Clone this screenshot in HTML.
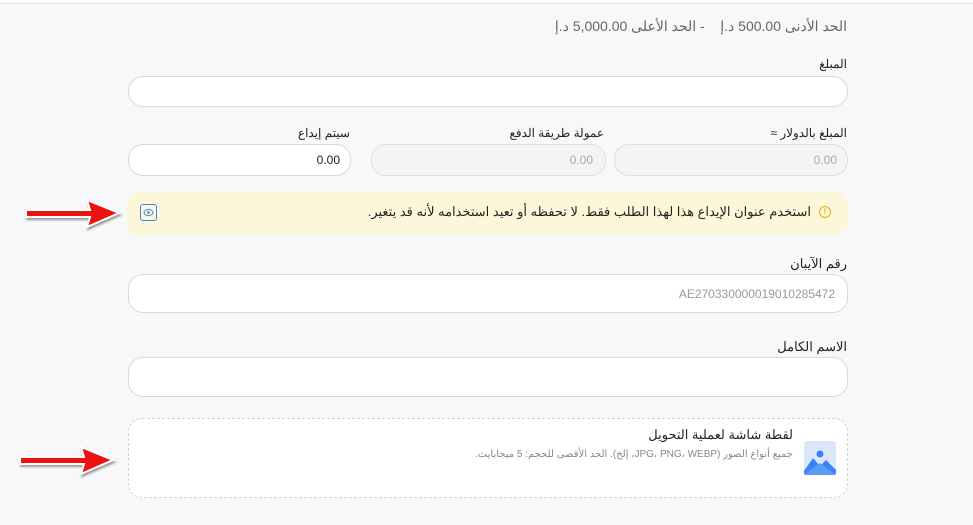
<!DOCTYPE html><html><head><meta charset="utf-8"><style>
body{margin:0;width:973px;height:525px;background:#f7f8fa;font-family:"Liberation Sans","Noto Sans CJK SC",sans-serif;position:relative;overflow:hidden}
.a{position:absolute}
.t{position:absolute;direction:rtl;white-space:nowrap;font-size:12px;color:#222}
.in{position:absolute;background:#fff;border:1px solid #d5d8de;border-radius:15px;box-sizing:border-box}
.dis{background:#f3f4f6;border-color:#dcdfe4}
.v{position:absolute;font-size:12px;color:#999;top:50%;transform:translateY(-50%)}
</style></head><body>
<div class="a" style="left:0;top:0;width:973px;height:3px;background:#fff;border-bottom:1px solid #e5e7eb"></div>
<div class="t" style="right:126px;top:18px;font-size:14px;color:#666">الحد الأدنى 500.00 د.إ &nbsp;&nbsp; - الحد الأعلى 5,000.00 د.إ</div>
<div class="t" style="right:126px;top:57px">المبلغ</div>
<div class="in" style="left:128px;top:76px;width:720px;height:31px"></div>
<div class="t" style="right:126px;top:126px">المبلغ بالدولار ≈</div>
<div class="t" style="right:369px;top:126px">عمولة طريقة الدفع</div>
<div class="t" style="right:623px;top:126px">سيتم إيداع</div>
<div class="in" style="left:128px;top:144px;width:223px;height:32px"><span class="v" style="right:10px;color:#222">0.00</span></div>
<div class="in dis" style="left:371px;top:144px;width:235px;height:32px"><span class="v" style="right:12px;color:#aaa">0.00</span></div>
<div class="in dis" style="left:614px;top:144px;width:234px;height:32px"><span class="v" style="right:10px;color:#aaa">0.00</span></div>
<div class="a" style="left:127px;top:192px;width:721px;height:43px;background:#fdf7d9;border-radius:12px"></div>
<div class="a" style="left:819px;top:206px;width:10px;height:10px;border:1.5px solid #e5b000;border-radius:50%;font-size:8px;color:#e5b000;text-align:center;line-height:10px;font-weight:bold">!</div>
<div class="t" style="right:162px;top:204px;font-size:13px">استخدم عنوان الإيداع هذا لهذا الطلب فقط. لا تحفظه أو تعيد استخدامه لأنه قد يتغير.</div>
<div class="a" style="left:140px;top:204px;width:17px;height:17px;border:1px solid #3b82f6;border-radius:3px;box-sizing:border-box"><svg width="15" height="15" viewBox="0 0 15 15" style="position:absolute;left:0;top:0"><ellipse cx="7.5" cy="7.5" rx="4.5" ry="3" fill="none" stroke="#3b82f6" stroke-width="1"/><circle cx="7.5" cy="7.5" r="1.3" fill="#3b82f6"/></svg></div>
<div class="t" style="right:126px;top:256px;font-size:13px">رقم الآيبان</div>
<div class="in" style="left:128px;top:274px;width:720px;height:39px"><span class="v" style="right:12px;color:#999">AE270330000019010285472</span></div>
<div class="t" style="right:126px;top:339px;font-size:13px">الاسم الكامل</div>
<div class="in" style="left:128px;top:357px;width:720px;height:40px"></div>
<div class="a" style="left:128px;top:418px;width:720px;height:80px;border:1px dashed #cfd3d9;border-radius:14px;box-sizing:border-box;background:#fff"></div>
<div class="t" style="right:180px;top:427px;font-size:13px">لقطة شاشة لعملية التحويل</div>
<div class="t" style="right:180px;top:449px;font-size:10px;color:#888">جميع أنواع الصور (JPG، PNG، WEBP، إلخ). الحد الأقصى للحجم: 5 ميجابايت.</div>
<svg class="a" style="left:804px;top:441px" width="32" height="34" viewBox="0 0 32 34"><rect width="32" height="34" rx="3" fill="#dbe8fb"/><circle cx="16" cy="13" r="3.5" fill="#3b82f6"/><path d="M0 30 L9 17 L16 25 L22 19 L32 29 V31 Q32 34 29 34 H3 Q0 34 0 31Z" fill="#3b82f6"/><path d="M0 34 L16 22 L32 34Z" fill="#5b9af5"/></svg>
<svg class="a" style="left:20px;top:196px" width="105" height="36" viewBox="0 0 105 36"><path d="M6 14 H70 L67 4 L99 17 L67 31 L70 21 H6Z" fill="#e11" stroke="#fff" stroke-width="2" filter="drop-shadow(1px 2px 1px rgba(0,0,0,.4))"/></svg>
<svg class="a" style="left:14px;top:443px" width="105" height="36" viewBox="0 0 105 36"><path d="M6 14 H70 L67 4 L99 17 L67 31 L70 21 H6Z" fill="#e11" stroke="#fff" stroke-width="2" filter="drop-shadow(1px 2px 1px rgba(0,0,0,.4))"/></svg>
</body></html>
